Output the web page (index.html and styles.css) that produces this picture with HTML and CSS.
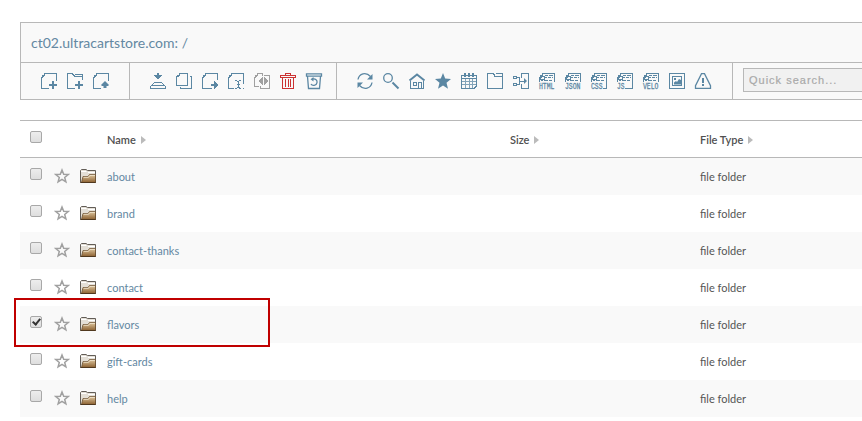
FILE: index.html
```html
<!DOCTYPE html>
<html>
<head>
<meta charset="utf-8">
<title>File Manager</title>
<link rel="stylesheet" href="styles.css">
</head>
<body>
<svg class="sprite">
    <symbol id="star" viewBox="0 0 16 16"><path d="M8 2l1.700 4.200 4.500.3-3.500 2.900 1.200 4.500L8 11.400l-3.900 2.500 1.200-4.500L1.800 6.500l4.500-.3z" fill="none" stroke="#a0a0a0" stroke-width="1.500"/></symbol>
    <symbol id="folder" viewBox="0 0 16 16">
        <path d="M.5 14.500V2.500l1-1H6l1.500 1h8v12z" fill="#e4dfd6" stroke="#625d57"/>
        <path d="M1 3.500h5.500M8 4.500h7" stroke="#fff"/>
        <path d="M1.500 14.500L3 8.500h5L9.500 6.500h6v8z" fill="url(#tan)" stroke="#6b4f30" stroke-width=".8"/>
        <path d="M3.500 9.300h5L10 7.400h5" fill="none" stroke="#f3e8d3" stroke-width=".8"/>
        <path d="M.5 14.500h15" stroke="#50381e"/>
    </symbol>
    <symbol id="script" viewBox="0 0 16 16">
        <path d="M.5 9V4.500h1v-2h2v-2h12V9" fill="none" stroke="currentColor" shape-rendering="crispEdges"/>
        <path d="M2 3h3v3H1V4h1zM6 2.500h3M10 2.500h4M6 4.500h2M9 4.500h3M13 4.500h1M2 7.500h2M5 7.500h4M10 7.500h3" fill="none" stroke="currentColor" shape-rendering="crispEdges"/>
    </symbol>
    <linearGradient id="tan" x1="0" y1="0" x2="0" y2="1"><stop offset="0" stop-color="#e0c9a2"/><stop offset="1" stop-color="#8c6131"/></linearGradient>
</svg>
<section class="toolbar">
    <div class="path">ct02.ultracartstore.com: /</div>
    <div class="tools">
        <div class="group file">
            <svg class="icon"><path d="M15.500 8V.5h-12v2h-2v2h-1v11H8" class="line"/><path d="M1 2h2v2H1zM11 8h2v3h3v2h-3v3h-2v-3H8v-2h3z"/></svg>
            <svg class="icon"><path d="M8 15.500H.5V.5h5v1h1v1h1v1h8V7M8 1.500h7.500v2" class="line"/><path d="M11 8h2v3h3v2h-3v3h-2v-3H8v-2h3z"/></svg>
            <svg class="icon"><path d="M15.500 8V.5h-12v2h-2v2h-1v11H8" class="line"/><path d="M1 2h2v2H1zM11.500 8h1v1h1v1h1v1h1v2h-2v2h-3v-2h-2v-2h1v-1h1V9h1z"/></svg>
        </div>
        <div class="group edit">
            <svg class="icon"><path d="M7 0h2v2h3v1h-1v1h-1v1H9v1H7V5H6V4H5V3H4V2h3z"/><path d="M4 9.500h8M3.500 10v1M12.500 10v1M2.500 11v1M13.500 11v1M1 12.500h14M.5 13v2.500h15V13" class="line"/></svg>
            <svg class="icon"><path d="M3.500.500h8v12h-11v-9h1v-1h2zM14 3.500h1.500v12H4V14" class="line"/><path d="M1 2h2v2H1z"/></svg>
            <svg class="icon"><path d="M15.500 7V.5h-12v2h-2v2h-1v11H10" class="line"/><path d="M1 2h2v2H1zM9 11h3V8h1v1h1v1h1v1h1v2h-1v1h-1v1h-1v1h-1v-3H9z"/></svg>
            <svg class="icon"><path d="M15.500 11V.5h-12v2h-2v2h-1v11H6M7 7.500h2M11 7.500h2M9 8.500h2M10.500 8v7M7 15.500h2M11 15.500h2M9 14.500h3M9 11.500h3M15 15.500h1" class="line"/><path d="M1 2h2v2H1z"/></svg>
            <svg class="icon gray"><path d="M8 3V.5H3.500v2h-2v2h-1v8.500H5M10 2.500h5.500v13h-9V13" class="line"/><path d="M1 2h2v2H1zM9 4v8H8v-1H7v-1H6V9H5V7h1V6h1V5h1V4zM10 4h1v1h1v1h1v1h1v2h-1v1h-1v1h-1v1h-1z"/></svg>
            <svg class="icon red"><path d="M5.500 2V.5h5V2M.5 2.500h15v2H.5zM2.500 5v10.500h11V5M5.500 6v8M8.500 6v8M10.500 6v8" class="line"/></svg>
            <svg class="icon"><path d="M.5.800h15v2.400H.5zM1.500 3.500l1 12h11l1-12" class="curve"/><path d="M6.500 6c3-.5 5 1 4.500 3.700-.5 3.300-5 3.300-6 1.300" class="curve"/><path d="M7.500 4v4.500L4.500 6.200z"/></svg>
        </div>
        <div class="group view">
            <svg class="icon"><path d="M1 6.500c1-6 8-8 12.500-3M15 9.500c-1 6-8 8-12.500 3" class="curve"/><path d="M15.500 1v5.500H10zM.5 15V9.500H6z"/></svg>
            <svg class="icon"><circle cx="5" cy="5" r="4.300" class="curve"/><path d="M9.500 9.500l6 6" class="curve thick"/></svg>
            <svg class="icon"><path d="M.5 7.500l7.500-6 7.500 6" class="curve thick"/><path d="M1.500 8v7.500h13V8M4.500 9.500h3v3h-3zM9.500 15V9.500h3V15" class="line"/></svg>
            <svg class="icon"><path d="M8 0l2.200 5.600 5.800.4-4.500 3.800L13 15.800 8 12.500l-5 3.300 1.500-6L0 6l5.800-.4z"/></svg>
            <svg class="icon"><path d="M.5 2.500h15V13l-2.500 2.500H.5zM1 5.500h14" class="line"/><path d="M1 8.500h14M1 11.500h14M4.500 6v9M8.500 6v9M11.500 6v9" class="line faint"/><path d="M3 0h2v4H3zM7 0h2v4H7zM11 0h2v4h-2z"/></svg>
            <svg class="icon"><path d="M.5 15.500V.5h6v1h1v2h8v12z" class="line"/><path d="M9 .5h6.500v3" class="line"/></svg>
            <svg class="icon"><path d="M.5 3.500h3v2h-3zM.5 10.500h3v2h-3zM4 4.500h2.500v7H4M7 8h6M8.500 5V.5h7v15h-7V11" class="line"/><path d="M11 5l3 3-3 3z"/></svg>
            <svg class="icon"><use href="#script"/><text x="0" y="16" textLength="15.500" lengthAdjust="spacingAndGlyphs">HTML</text></svg>
            <svg class="icon"><use href="#script"/><text x="0" y="16" textLength="15.500" lengthAdjust="spacingAndGlyphs">JSON</text></svg>
            <svg class="icon"><use href="#script"/><path d="M12 15.500h3.500V9" class="line"/><text x="0" y="16" textLength="11.500" lengthAdjust="spacingAndGlyphs">CSS</text></svg>
            <svg class="icon"><use href="#script"/><path d="M8 15.500h7.500V9" class="line"/><text x="0" y="16" textLength="7.500" lengthAdjust="spacingAndGlyphs">JS</text></svg>
            <svg class="icon"><use href="#script"/><text x="0" y="16" textLength="15.500" lengthAdjust="spacingAndGlyphs">VELO</text></svg>
            <svg class="icon"><path d="M.5.5h15v15H.5zM3.500 3.500h9v9h-9z" class="line"/><path d="M5 11.500v-2l2-1.500 1 1 2-3 2 1v4.500zM5 5h2v2H5z"/></svg>
            <svg class="icon"><path d="M6.500.7h3l6 12v2.600H.5v-2.600z" class="curve"/><path d="M7 5h2v5H7zM7 11h2v2H7z"/></svg>
        </div>
        <div class="group search"><input type="text" placeholder="Quick search..."></div>
    </div>
</section>
<section class="files">
    <table>
        <thead>
            <tr><th class="check"><input type="checkbox"></th><th class="mark"></th><th class="kind"></th><th class="name">Name<i></i></th><th class="size">Size<i></i></th><th>File Type<i></i></th></tr>
        </thead>
        <tbody>
            <tr><td><input type="checkbox"></td><td><svg class="icon"><use href="#star"/></svg></td><td><svg class="icon"><use href="#folder"/></svg></td><td><a>about</a></td><td></td><td>file folder</td></tr>
            <tr><td><input type="checkbox"></td><td><svg class="icon"><use href="#star"/></svg></td><td><svg class="icon"><use href="#folder"/></svg></td><td><a>brand</a></td><td></td><td>file folder</td></tr>
            <tr><td><input type="checkbox"></td><td><svg class="icon"><use href="#star"/></svg></td><td><svg class="icon"><use href="#folder"/></svg></td><td><a>contact-thanks</a></td><td></td><td>file folder</td></tr>
            <tr><td><input type="checkbox"></td><td><svg class="icon"><use href="#star"/></svg></td><td><svg class="icon"><use href="#folder"/></svg></td><td><a>contact</a></td><td></td><td>file folder</td></tr>
            <tr><td><input type="checkbox" checked></td><td><svg class="icon"><use href="#star"/></svg></td><td><svg class="icon"><use href="#folder"/></svg></td><td><a>flavors</a></td><td></td><td>file folder</td></tr>
            <tr><td><input type="checkbox"></td><td><svg class="icon"><use href="#star"/></svg></td><td><svg class="icon"><use href="#folder"/></svg></td><td><a>gift-cards</a></td><td></td><td>file folder</td></tr>
            <tr><td><input type="checkbox"></td><td><svg class="icon"><use href="#star"/></svg></td><td><svg class="icon"><use href="#folder"/></svg></td><td><a>help</a></td><td></td><td>file folder</td></tr>
        </tbody>
    </table>
    <div class="highlight"></div>
</section>
</body>
</html>
```
FILE: styles.css
```css
body {
    margin: 0;
    padding: 22px 0 0 20px;
    background: #fff;
    color: #555;
    font-family: Lato, sans-serif;
    font-size: 11px;
    overflow: hidden;
}
.sprite {
    display: block;
    width: 0;
    height: 0;
}
.toolbar {
    border: 1px solid #b8b8b8;
    border-right: none;
    background: #f9f9f9;
}
.path {
    height: 39px;
    line-height: 40px;
    padding-left: 10px;
    border-bottom: 1px solid #b8b8b8;
    color: #6488a2;
    font-size: 14px;
}
.tools {
    display: flex;
    height: 36px;
}
.group {
    display: flex;
    align-items: center;
    gap: 10px;
    box-sizing: border-box;
    padding-left: 20px;
    border-right: 1px solid #b8b8b8;
}
.file {
    width: 109px;
}
.edit {
    width: 207px;
}
.view {
    width: 396px;
}
.search {
    flex: 1;
    padding-left: 10px;
    padding-bottom: 2px;
    border: none;
    overflow: hidden;
}
.icon {
    display: block;
    flex: none;
    width: 16px;
    height: 16px;
    color: #5b87a3;
    fill: currentColor;
    overflow: visible;
}
.icon text {
    font: 9px "Liberation Mono", monospace;
    stroke: currentColor;
    stroke-width: .3px;
}
.line {
    fill: none;
    stroke: currentColor;
    shape-rendering: crispEdges;
}
.curve {
    fill: none;
    stroke: currentColor;
    stroke-width: 1.3;
}
.thick {
    stroke-width: 2;
}
.faint {
    opacity: .75;
}
.gray {
    color: #a0a0a0;
}
.red {
    color: #cc3333;
}
.search input {
    flex: none;
    width: 150px;
    height: 24px;
    box-sizing: border-box;
    padding: 0 5px;
    border: 1px solid #b8b8b8;
    background: #f1f1f1;
    font: 11px "Liberation Sans", Arial, sans-serif;
    letter-spacing: 1px;
}
.search input::placeholder {
    color: #a9a9a9;
    -webkit-text-stroke: .2px #a9a9a9;
}
.files {
    position: relative;
    margin-top: 20px;
}
table {
    width: 100%;
    table-layout: fixed;
    border-collapse: separate;
    border-spacing: 0;
}
th {
    height: 36px;
    padding: 0;
    border-top: 1px solid #b8b8b8;
    border-bottom: 1px solid #b8b8b8;
    text-align: left;
    font-weight: 600;
    color: #505050;
}
td {
    height: 37px;
    padding: 0;
}
td .icon {
    margin-bottom: 1px;
}
tbody tr:nth-child(odd) {
    background: #f9f9f9;
}
.check {
    width: 34px;
}
.mark {
    width: 26px;
}
.kind {
    width: 27px;
}
.name {
    width: 403px;
}
.size {
    width: 190px;
}
th i {
    display: inline-block;
    margin-left: 5px;
    border: 4px solid transparent;
    border-left: 5px solid #bbb;
    border-right: none;
}
a {
    color: #6488a2;
}
input[type="checkbox"] {
    display: block;
    appearance: none;
    width: 12px;
    height: 12px;
    margin: 0 0 5px 10px;
    border: 1px solid #a8a8a8;
    border-radius: 2px;
    background: linear-gradient(#ededed, #dedede);
}
input[type="checkbox"]:checked::before {
    content: "";
    display: block;
    width: 3px;
    height: 6px;
    margin: 0 0 0 3px;
    border: solid #333;
    border-width: 0 2px 2px 0;
    transform: rotate(40deg);
}
.highlight {
    position: absolute;
    left: -6px;
    top: 178px;
    width: 252px;
    height: 45px;
    border: 2px solid #c00000;
}
```
